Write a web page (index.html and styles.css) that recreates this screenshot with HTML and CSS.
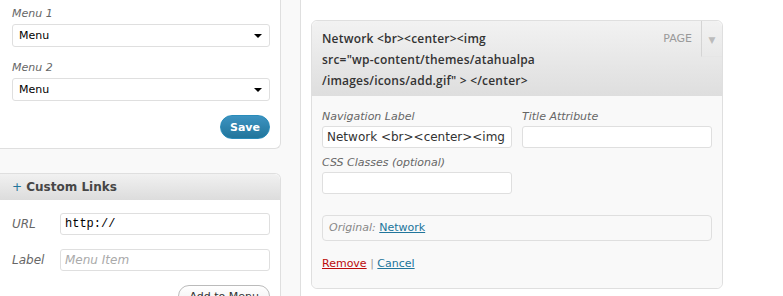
FILE: index.html
```html
<!DOCTYPE html>
<html lang="en">
<head>
    <meta charset="UTF-8">
    <title>Menus</title>
    <link rel="stylesheet" href="styles.css">
</head>
<body>
    <div class="page">
        <!-- Left column: theme locations and custom links -->
        <div class="side">
            <div class="box locations">
                <label class="field-label">Menu 1</label>
                <div class="select"><span>Menu</span><span class="caret"></span></div>
                <label class="field-label second">Menu 2</label>
                <div class="select"><span>Menu</span><span class="caret"></span></div>
                <div class="actions">
                    <button class="btn-primary">Save</button>
                </div>
            </div>

            <div class="box links">
                <div class="box-head"><span class="plus">+</span> Custom Links</div>
                <div class="box-body">
                    <div class="row">
                        <span class="row-label">URL</span>
                        <input class="text mono" type="text" value="http://">
                    </div>
                    <div class="row">
                        <span class="row-label">Label</span>
                        <input class="text" type="text" placeholder="Menu Item">
                    </div>
                    <div class="actions">
                        <button class="btn-secondary">Add to Menu</button>
                    </div>
                </div>
            </div>
        </div>

        <!-- Right column: menu item editor -->
        <div class="main">
            <div class="item">
                <div class="item-bar">
                    <div class="item-title">Network &lt;br&gt;&lt;center&gt;&lt;img <span class="nowrap">src="wp-content/themes/atahualpa</span> /images/icons/add.gif" &gt; &lt;/center&gt;</div>
                    <span class="item-type">PAGE</span>
                    <span class="item-toggle">&#9660;</span>
                </div>
                <div class="item-body">
                    <div class="fields">
                        <div class="field">
                            <label class="field-label">Navigation Label</label>
                            <input class="text" type="text" value="Network <br><center><img src=&quot;wp-content&quot;">
                        </div>
                        <div class="field">
                            <label class="field-label">Title Attribute</label>
                            <input class="text" type="text">
                        </div>
                        <div class="field">
                            <label class="field-label">CSS Classes (optional)</label>
                            <input class="text" type="text">
                        </div>
                    </div>
                    <div class="original">
                        <span class="orig-label">Original:</span> <a href="#">Network</a>
                    </div>
                    <div class="item-actions">
                        <a href="#" class="remove">Remove</a> <span class="sep">|</span> <a href="#">Cancel</a>
                    </div>
                </div>
            </div>
        </div>
    </div>
</body>
</html>
```

FILE: styles.css
```css
body {
    margin: 0;
    font-family: "DejaVu Sans", Verdana, sans-serif;
    font-size: 12px;
    color: #333;
    background: #fff;
}
.page {
    display: flex;
    height: 296px;
    overflow: hidden;
}
.side {
    width: 300px;
    background: #f9f9f9;
    border-right: 1px solid #dfdfdf;
    flex-shrink: 0;
}
.box {
    width: 281px;
    background: #fff;
    border: 1px solid #dfdfdf;
    border-left: 0;
    border-radius: 0 6px 6px 0;
    box-sizing: border-box;
}
.locations {
    border-top: 0;
    border-radius: 0 0 6px 0;
    padding: 6px 10px 9px 12px;
}
.field-label {
    display: block;
    font-style: italic;
    color: #666;
    font-size: 11px;
    line-height: 16px;
    margin-bottom: 2px;
}
.second {
    margin-top: 13px;
}
.select {
    display: flex;
    justify-content: space-between;
    align-items: center;
    height: 21px;
    border: 1px solid #dfdfdf;
    border-radius: 3px;
    padding: 0 6px;
    font-size: 11px;
    color: #000;
    background: #fff;
}
.caret {
    width: 0;
    height: 0;
    border-left: 4px solid transparent;
    border-right: 4px solid transparent;
    border-top: 4px solid #000;
    margin-right: 1px;
}
.actions {
    display: flex;
    justify-content: flex-end;
    margin-top: 14px;
}
.btn-primary {
    font-family: inherit;
    font-size: 11px;
    font-weight: bold;
    color: #fff;
    background: linear-gradient(#3d93c1, #21759b);
    border: 1px solid #298cba;
    border-radius: 12px;
    height: 24px;
    padding: 0 9px;
}
.links {
    margin-top: 24px;
    border-radius: 0 6px 0 0;
}
.box-head {
    background: linear-gradient(#f1f1f1, #dcdcdc);
    height: 26px;
    line-height: 26px;
    padding-left: 12px;
    font-size: 12px;
    font-weight: bold;
    color: #464646;
    border-radius: 0 6px 0 0;
}
.plus {
    color: #21759b;
    font-weight: normal;
}
.box-body {
    padding: 13px 10px 0 12px;
}
.row {
    display: flex;
    align-items: center;
    margin-bottom: 14px;
}
.row-label {
    width: 48px;
    font-style: italic;
    color: #666;
    font-size: 12px;
}
.text {
    box-sizing: border-box;
    height: 22px;
    border: 1px solid #dfdfdf;
    border-radius: 3px;
    padding: 0 4px;
    font-family: inherit;
    font-size: 12px;
    color: #333;
    background: #fff;
    outline: none;
}
.row .text {
    flex: 1;
}
.mono {
    font-family: "Liberation Mono", monospace;
    color: #000;
}
.text::placeholder {
    color: #aaa;
    font-style: italic;
}
.btn-secondary {
    font-family: inherit;
    font-size: 11px;
    color: #333;
    background: linear-gradient(#fff, #eee);
    border: 1px solid #bbb;
    border-radius: 11px;
    height: 23px;
    padding: 0 10px;
}
.main {
    flex: 1;
    padding: 20px 0 0 10px;
}
.item {
    width: 412px;
    border: 1px solid #dfdfdf;
    border-radius: 6px;
    box-sizing: border-box;
}
.item-bar {
    position: relative;
    background: linear-gradient(#f2f2f2, #dedede);
    border-radius: 6px 6px 0 0;
    padding: 7px 90px 5px 10px;
}
.item-title {
    font-family: "Open Sans", sans-serif;
    font-weight: 600;
    font-size: 12px;
    letter-spacing: 0.2px;
    line-height: 21px;
    color: #333;
}
.nowrap {
    white-space: nowrap;
}
.item-type {
    position: absolute;
    top: 11px;
    right: 30px;
    font-size: 11px;
    color: #999;
}
.item-toggle {
    position: absolute;
    top: 0;
    right: 0;
    width: 21px;
    height: 36px;
    border-left: 1px solid #d4d4d4;
    border-bottom: 1px solid #e6e6e6;
    box-sizing: border-box;
    text-align: center;
    line-height: 38px;
    font-size: 9px;
    color: #bbb;
}
.item-body {
    background: #f9f9f9;
    border-radius: 0 0 6px 6px;
    padding: 13px 10px 18px 10px;
}
.fields {
    display: grid;
    grid-template-columns: 190px 190px;
    column-gap: 10px;
    row-gap: 7px;
}
.fields .field-label {
    margin-bottom: 1px;
}
.fields .text {
    width: 190px;
}
.original {
    margin-top: 21px;
    height: 26px;
    line-height: 24px;
    box-sizing: border-box;
    border: 1px solid #dfdfdf;
    border-radius: 4px;
    padding-left: 6px;
    font-size: 11px;
}
.orig-label {
    font-style: italic;
    color: #888;
}
a {
    color: #21759b;
}
.item-actions {
    margin-top: 16px;
    font-size: 11px;
}
.item-actions a.remove {
    color: #bc0b0b;
}
.sep {
    color: #999;
}
```
